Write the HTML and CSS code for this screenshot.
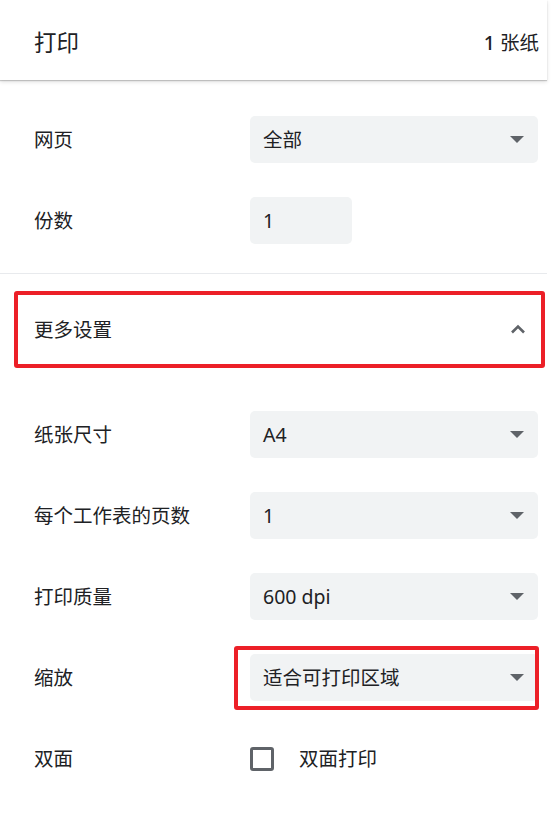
FILE: index.html
```html
<!DOCTYPE html>
<html lang="zh-CN">
<head>
<meta charset="utf-8">
<title>打印</title>
<link rel="stylesheet" href="styles.css">
</head>
<body>
<div class="page">
  <header class="header">
    <h1 class="title">打印</h1>
    <div class="sheets"><b>1</b> 张纸</div>
  </header>
  <main class="settings">
    <div class="row">
      <div class="label">网页</div>
      <div class="select"><span>全部</span><span class="arrow"></span></div>
    </div>
    <div class="row">
      <div class="label">份数</div>
      <div class="input">1</div>
    </div>
    <div class="divider"></div>
    <div class="more">
      <span>更多设置</span>
      <svg class="chevron" width="16" height="10" viewBox="0 0 16 10"><path d="M2 8.5 L8 2.5 L14 8.5" fill="none" stroke="#5f6368" stroke-width="2.6"/></svg>
    </div>
    <div class="row">
      <div class="label">纸张尺寸</div>
      <div class="select"><span>A4</span><span class="arrow"></span></div>
    </div>
    <div class="row">
      <div class="label">每个工作表的页数</div>
      <div class="select"><span>1</span><span class="arrow"></span></div>
    </div>
    <div class="row">
      <div class="label">打印质量</div>
      <div class="select"><span>600 dpi</span><span class="arrow"></span></div>
    </div>
    <div class="row">
      <div class="label">缩放</div>
      <div class="select highlighted"><span>适合可打印区域</span><span class="arrow"></span><span class="mark"></span></div>
    </div>
    <div class="row">
      <div class="label">双面</div>
      <label class="check"><span class="box"></span><span>双面打印</span></label>
    </div>
  </main>
</div>
</body>
</html>
```
FILE: styles.css
```css
html, body {
  margin: 0;
  padding: 0;
  background: #fff;
}
body {
  font-family: "Noto Sans", "Noto Sans CJK SC", sans-serif;
  color: #202124;
  font-size: 19.5px;
}
.page {
  width: 547px;
}
.header {
  height: 80px;
  display: flex;
  align-items: center;
  justify-content: space-between;
  padding: 6px 8px 0 34px;
  box-sizing: border-box;
  box-shadow: 0 1px 1px rgba(0,0,0,0.18), 0 2px 4px rgba(0,0,0,0.12);
  position: relative;
}
.title {
  margin: 0;
  font-size: 22.5px;
  font-weight: 400;
  line-height: 1;
}
.sheets {
  font-size: 19.5px;
  line-height: 1;
}
.sheets b {
  font-weight: 500;
}
.settings {
  padding-top: 19px;
}
.row {
  height: 81px;
  display: flex;
  align-items: center;
}
.label {
  width: 250px;
  padding-left: 34px;
  box-sizing: border-box;
  line-height: 1;
}
.select {
  width: 288px;
  height: 47px;
  box-sizing: border-box;
  background: #f1f3f4;
  border-radius: 5px;
  display: flex;
  align-items: center;
  justify-content: space-between;
  padding: 0 14px 0 13px;
  line-height: 1;
  position: relative;
}
.arrow {
  width: 0;
  height: 0;
  border-left: 7px solid transparent;
  border-right: 7px solid transparent;
  border-top: 7px solid #5f6368;
}
.input {
  width: 102px;
  height: 47px;
  box-sizing: border-box;
  background: #f1f3f4;
  border-radius: 5px;
  display: flex;
  align-items: center;
  padding-left: 13px;
  line-height: 1;
}
.divider {
  margin-top: 12px;
  height: 1px;
  background: #e8eaed;
}
.more {
  margin: 17px 2px 26px 14px;
  height: 77px;
  box-sizing: border-box;
  border: 4px solid #ec1f27;
  border-radius: 3px;
  display: flex;
  align-items: center;
  justify-content: space-between;
  padding: 0 15px 0 16px;
  line-height: 1;
}
.chevron {
  display: block;
  margin-top: -2px;
}
.mark {
  position: absolute;
  top: -8px;
  bottom: -9px;
  left: -16px;
  right: -1px;
  border: 4px solid #ec1f27;
  border-radius: 3px;
  pointer-events: none;
}
.check {
  display: flex;
  align-items: center;
  gap: 25px;
  line-height: 1;
}
.box {
  width: 24px;
  height: 24px;
  box-sizing: border-box;
  border: 3px solid #5f6368;
  border-radius: 3px;
}
```
